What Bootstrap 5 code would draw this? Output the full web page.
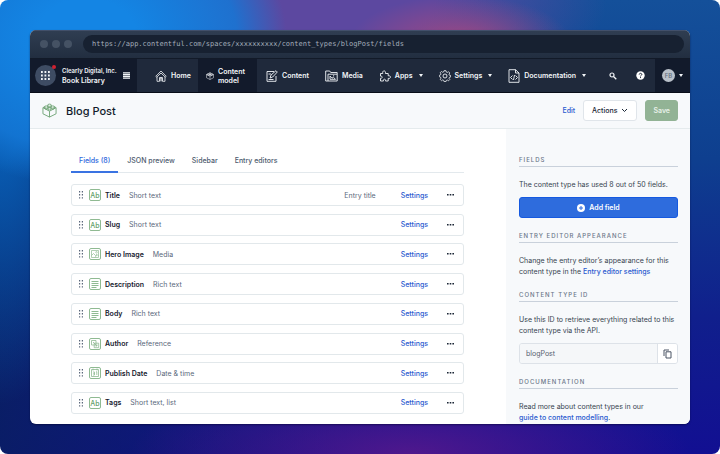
<!DOCTYPE html>
<html lang="en">
<head>
<meta charset="utf-8">
<meta name="viewport" content="width=device-width, initial-scale=1">
<title>Blog Post – Content model</title>
<link href="https://cdn.jsdelivr.net/npm/bootstrap@5.3.0/dist/css/bootstrap.min.css" rel="stylesheet">
<style>
html{background:#fff}
body{font-family:Inter,"Liberation Sans",sans-serif;font-size:7px;line-height:11px;color:#36434f;background:#fff}
.stage{min-height:100vh;padding:30px;border-radius:8px;
background:
radial-gradient(ellipse 200px 150px at 12% 8%,#1485e4 25%,rgba(20,120,215,.85) 75%,transparent),
radial-gradient(ellipse 110px 45px at 64% 9%,rgba(165,72,130,.95),transparent),
radial-gradient(ellipse 290px 120px at 44% 0,rgba(92,72,160,1) 40%,transparent),
radial-gradient(ellipse 280px 80px at 57% 100%,rgba(82,24,140,.95),transparent),
radial-gradient(ellipse 110px 350px at 0 12%,rgba(8,100,190,.85) 30%,transparent),
linear-gradient(90deg,rgba(8,32,92,.8) 0,rgba(12,28,100,.5) 25%,transparent 60%),
linear-gradient(180deg,#14509a 0,#0e3f8f 35%,#101f8c 70%,#120f92 100%)}
.app-window{border-radius:6px;overflow:hidden;background:#fff;box-shadow:0 1px 2px rgba(0,0,40,.5);height:0;min-height:calc(100vh - 60px)}
.chrome{height:28px;background:linear-gradient(#303e52,#222e40);padding:0 6px 0 10px;gap:4px;box-shadow:inset 0 1px 0 #42506a}
.chrome i{width:8px;height:8px;border-radius:50%;background:#455264}
.address{background:#172131;border:0;border-radius:9px;height:18px;padding:0 9px;margin-left:7px;color:#a3adba;font:7px "DejaVu Sans Mono","Liberation Mono",monospace;min-width:0}
.topnav{height:35px;background:#1f293b;border-top:1px solid #121a28;border-bottom:1px solid #080d18;color:#f2f5f8;font-weight:600}
.topnav a{color:inherit;text-decoration:none;line-height:9px;gap:4px}
.topnav button{color:inherit;background:none;border:0;padding:0;font-weight:600}
.topnav .dark{background:#121a2b}
.space{width:107px;padding-left:5px;gap:6px}
.space-name{line-height:10px;white-space:nowrap}
.org{font-size:6px}
.apps-btn{width:21px;height:21px;border-radius:50%;background:#3e4c63!important;position:relative}
.apps-btn b{position:absolute;right:0;top:0;width:4px;height:4px;border-radius:50%;background:#cf2130}
.caret{border:2px solid transparent;border-top:3px solid #f2f5f8;border-bottom:0;margin-left:2px}
.home-link{width:61px;padding-left:18px}
.model-link{width:59px;padding:0 8px}
.content-link{padding-left:9px}
.tools{gap:19px;margin-right:10px}
.user{width:35px}
.avatar{width:13px;height:13px;border-radius:50%;background:#b9c0c9;color:#626e7d;font-size:6px;font-weight:500}
.page-head{height:36px;background:#f7f9fb;border-bottom:1px solid #e5ebed;padding:0 12px;color:#111b2b}
.page-head h1{font-size:11px;line-height:14px;font-weight:500;margin:0 auto 0 9px}
a.act,.act{color:#2a59cf;text-decoration:none;font-weight:500}
.ctl{font-size:7px;line-height:11px;height:21px;padding:0 8px;border-radius:3px;font-weight:500}
.ctl-out{background:#fff;border:1px solid #e0e5ea;color:#1a2636}
.ctl-save,.ctl-save:disabled{background:#92b395;border-color:#92b395;color:#e7f0e8;opacity:1;font-weight:600;padding:0 7px}
.ctl-add{background:#2e6cdd;border:1px solid #1559e0;color:#fff;font-weight:600}
.content-area{padding:20px 42px 10px 41px;min-width:0}
.tabs{border-bottom:1px solid #e3e9ed;margin-bottom:11px;gap:1px}
.tabs button{border:0;background:none;height:24px;padding:0 8px;color:#4d5b6e;font-weight:500;margin-bottom:-1px;border-bottom:2px solid transparent}
.tabs .on{color:#2e68dc;border-color:#3a73e2}
.field-row{height:22px;border:1px solid #e2e8eb;border-radius:3px;padding:0 9px 0 7px}
.grip{margin-right:6px}
.field-row strong{font-weight:600;color:#16202e;margin:0 9px 0 4px}
.field-row .kind,.hint{color:#5a687b}
.hint{margin-right:25px}
.dots{border:0;background:none;padding:0;margin-left:19px}
.side{width:184px;background:#f7f9fb;padding:25px 12px 0 13px;overflow:hidden}
.side h2{font-size:6px;line-height:12px;font-weight:500;letter-spacing:1px;color:#6b7789;border-bottom:1px solid #c9d1db;margin:0 0 12px;text-transform:uppercase}
.side p{margin:0 0 7px}
.side section{margin-bottom:12px}
.side section p:last-child{margin:0}
.id-box{height:21px;border:1px solid #dde2e8;border-radius:3px;overflow:hidden}
.id-box input{border:0;background:#f5f7f9;color:#56616f;padding:0 6px;min-width:0;font-size:7px}
.id-box button{width:20px;background:#fff;border:0;border-left:1px solid #dde2e8;padding:0;color:#4a5564}
svg{display:block;flex:none;fill:none;stroke:currentColor}
</style>
<script src="https://cdn.jsdelivr.net/npm/bootstrap@5.3.0/dist/js/bootstrap.bundle.min.js"></script>
</head>
<body>
<svg width="0" height="0" class="position-absolute" aria-hidden="true">
<symbol id="brick" viewBox="0 0 16 16"><path d="M3 3.800 1 5v6.500L8 15l7-3.500V5l-2-1.200M1 5l7 3.700L15 5M8 8.700V15"/><path d="M6 2.600v1.200c0 1.400 4 1.400 4 0V2.600M2.600 4.500v1c0 1.400 4 1.400 4 0v-1M9.400 4.500v1c0 1.400 4 1.400 4 0v-1"/><ellipse cx="8" cy="2.400" rx="2" ry="1.200"/><ellipse cx="4.600" cy="4.300" rx="2" ry="1.200"/><ellipse cx="11.400" cy="4.300" rx="2" ry="1.200"/><ellipse cx="8" cy="6.200" rx="2" ry="1.200"/></symbol>
<symbol id="grip" viewBox="0 0 4 8"><path fill="#59667a" stroke="none" d="M0 0h1.200v1.400H0zM2.800 0H4v1.400H2.800zM0 3.100h1.200v1.400H0zM2.800 3.100H4v1.400H2.800zM0 6.200h1.200v1.400H0zM2.800 6.200H4v1.400H2.800z"/></symbol>
<symbol id="t-ab" viewBox="0 0 12 12"><rect x=".5" y=".5" width="11" height="11" rx="1.500"/></symbol>
<symbol id="t-media" viewBox="0 0 12 12"><rect x=".5" y=".5" width="11" height="11" rx="1.500"/><path stroke-width=".7" d="M2.500 2.500h7v7h-7z M2.500 7.500 4.500 5.500l2 2L8 6.500l1.500 1.500 M6 9.500l2-3"/><circle cx="7.500" cy="4.300" r=".8" stroke-width=".6"/></symbol>
<symbol id="t-rich" viewBox="0 0 12 12"><rect x=".5" y=".5" width="11" height="11" rx="1.500"/><path d="M2.500 3.500h7M2.500 5.500h7M2.500 7.500h7M2.500 9.500h5"/></symbol>
<symbol id="t-ref" viewBox="0 0 12 12"><rect x=".5" y=".5" width="11" height="11" rx="1.500"/><path stroke-width=".8" d="M2.500 2.500h4.500v4.500H2.500zM5.200 5.200h4.500v4.500H5.200zM4 4l4 4M6.500 8H8V6.500"/></symbol>
<symbol id="t-date" viewBox="0 0 12 12"><rect x=".5" y=".5" width="11" height="11" rx="1.500"/><path stroke-width=".8" d="M2.500 2.500h7v7h-7z M4 1.500v2M8 1.500v2 M4 5h1.500v3H4M4.300 6.500h1.200M7 5l.8-.3V8"/></symbol>
</svg>

<div class="stage">
<main class="app-window d-flex flex-column">
  <div class="chrome d-flex align-items-center flex-shrink-0"><i></i><i></i><i></i>
    <input class="address flex-grow-1" aria-label="Address" value="https://app.contentful.com/spaces/xxxxxxxxxx/content_types/blogPost/fields">
  </div>

  <nav class="topnav d-flex flex-shrink-0">
    <div class="space dark d-flex align-items-center">
      <button class="apps-btn d-flex align-items-center justify-content-center" aria-label="Apps menu"><svg width="9" height="9" viewBox="0 0 9 9"><path stroke-width="1.800" stroke-dasharray="1.800 1.700" d="M0 1h9M0 4.500h9M0 8h9"/></svg><b></b></button>
      <div class="space-name"><span class="org">Clearly Digital, Inc.</span><br>Book Library</div>
      <button aria-label="Menu"><svg width="7" height="7" viewBox="0 0 7 7"><path stroke-width="1.200" d="M0 .8h7M0 2.600h7M0 4.400h7M0 6.200h7"/></svg></button>
    </div>
    <div class="d-flex align-items-stretch flex-grow-1">
      <a href="#" class="home-link d-flex align-items-center"><svg width="12" height="12" viewBox="0 0 12 12"><path stroke-width=".8" d="M.8 6.300 6 1l5.200 5.300-1 .8L6 3 1.800 7.100zM2 7v4.300h2.500V7.500h3v3.800H10V7M5.200 11.300V8.200h1.600v3.100"/></svg>Home</a>
      <a href="#" class="model-link dark d-flex align-items-center"><svg width="8" height="8"><use href="#brick"/></svg><span>Content<br>model</span></a>
      <a href="#" class="content-link d-flex align-items-center"><svg width="12" height="12" viewBox="0 0 12 12"><path stroke-width=".9" d="M8 1.500H1v9.800h9V6M4 8l1-3 5-4.300L11.300 2 6.700 7zM2.500 4h2.500M2.500 9.500h5"/></svg>Content</a>
      <a href="#" class="d-flex align-items-center ms-3"><svg width="13" height="12" viewBox="0 0 13 12"><path stroke-width=".9" d="M3 11H.7V1h4l1 1.500h6.500V11H3V4.200h9M5 9.200V6l2 2.200 1.300-1L10.500 9.300H5M8 5.800h1.200"/></svg>Media</a>
      <a href="#" class="d-flex align-items-center ms-3"><svg width="12" height="12" viewBox="0 0 12 12"><path stroke-width=".9" d="M1.500 3.500h2.300c-1-3.500 3.500-3.500 2.600 0h2.800v2.300c3-.8 3 3.400 0 2.600V11H6.500c.7-2.400-2.700-2.400-2 0h-3V8.300c2.200.5 2.200-2.700 0-2.200z"/></svg>Apps<span class="caret"></span></a>
      <a href="#" class="d-flex align-items-center ms-3"><svg width="12" height="12" viewBox="0 0 12 12"><circle cx="6" cy="6" r="2" stroke-width=".9"/><path stroke-width=".8" d="M5 .7h2l.3 1.400 1 .4 1.200-.8 1.300 1.300-.8 1.200.4 1 1.300.3v1.500l-1.300.3-.4 1 .8 1.200-1.300 1.300-1.200-.8-1 .4-.3 1.200H5l-.3-1.300-1-.4-1.200.8-1.300-1.300.8-1.200-.4-1L.4 6.700V5.300l1.200-.4.4-1-.8-1.200 1.300-1.200 1.200.8 1-.4z"/></svg>Settings<span class="caret"></span></a>
      <a href="#" class="d-flex align-items-center ms-3"><svg width="12" height="14" viewBox="0 0 12 14"><path d="M1 .7h6.500L11 4v9.300H1zM7.500.7V4H11M4.500 6.500l-2 2 2 2M7.500 6.500l2 2-2 2M6.500 6l-1 5" stroke-width=".9"/></svg>Documentation<span class="caret"></span></a>
      <div class="tools d-flex align-items-center ms-auto">
      <button aria-label="Search"><svg width="8" height="8" viewBox="0 0 8 8"><circle cx="3" cy="3" r="2" stroke-width="1.200"/><path stroke-width="1.300" d="m4.500 4.500 2.800 2.800"/></svg></button>
      <button aria-label="Help"><svg width="9" height="9" viewBox="0 0 9 9"><circle cx="4.500" cy="4.500" r="4.200" fill="#fff" stroke="none"/><path stroke="#1f293b" d="M3.200 3.600c0-1.800 2.800-1.600 2.600 0C5.700 4.400 4.500 4.300 4.500 5.400M4.500 6.100v1"/></svg></button>
      </div>
    </div>
    <button class="dark user d-flex align-items-center justify-content-center" aria-label="Account"><span class="avatar d-flex align-items-center justify-content-center">FB</span><span class="caret ms-1"></span></button>
  </nav>

  <header class="page-head d-flex align-items-center flex-shrink-0">
    <svg width="15" height="15" color="#72a577"><use href="#brick"/></svg>
    <h1>Blog Post</h1>
    <a href="#" class="act me-2">Edit</a>
    <button class="btn ctl ctl-out d-flex align-items-center gap-1 me-2">Actions <svg width="7" height="5" viewBox="0 0 7 5"><path d="m1 1 2.500 2.500L6 1"/></svg></button>
    <button class="btn ctl ctl-save" disabled>Save</button>
  </header>

  <div class="d-flex flex-grow-1 overflow-hidden">
    <div class="content-area flex-grow-1 d-flex flex-column">
      <div class="tabs d-flex" role="tablist"><button role="tab" class="on" aria-selected="true">Fields (8)</button><button role="tab">JSON preview</button><button role="tab">Sidebar</button><button role="tab">Entry editors</button></div>
      <div id="fields" class="d-flex flex-column justify-content-between flex-grow-1"></div>
    </div>
    <aside class="side flex-shrink-0">
      <section><h2>Fields</h2><p>The content type has used 8 out of 50 fields.</p>
        <button class="btn ctl ctl-add w-100 d-flex align-items-center justify-content-center gap-1"><svg width="8" height="8" viewBox="0 0 8 8"><circle cx="4" cy="4" r="4" fill="#fff" stroke="none"/><path stroke="#2e6cdd" d="M4 2v4M2 4h4"/></svg>Add field</button></section>
      <section><h2>Entry editor appearance</h2><p>Change the entry editor’s appearance for this<br>content type in the <a class="act" href="#">Entry editor settings</a></p></section>
      <section><h2>Content type ID</h2><p>Use this ID to retrieve everything related to this content type via the API.</p>
        <div class="id-box d-flex"><input class="flex-grow-1" aria-label="Content type ID" value="blogPost" readonly><button aria-label="Copy" class="d-flex align-items-center justify-content-center"><svg width="9" height="10" viewBox="0 0 9 10"><path d="M1 7V1h5M3 2.800h5v6.200H3z"/></svg></button></div></section>
      <section><h2>Documentation</h2><p>Read more about content types in our<br><a class="act" href="#">guide to content modelling</a>.</p></section>
    </aside>
  </div>
</main>
</div>
<script>
const fields=[["Title","Short text","ab","Entry title"],["Slug","Short text","ab"],["Hero Image","Media","media"],["Description","Rich text","rich"],["Body","Rich text","rich"],["Author","Reference","ref"],["Publish Date","Date & time","date"],["Tags","Short text, list","ab"]];
document.getElementById("fields").innerHTML=fields.map(([n,k,t,h])=>`<div class="field-row d-flex align-items-center"><svg width="4" height="8" class="grip"><use href="#grip"/></svg><svg width="12" height="12" viewBox="0 0 12 12" color="#8fba92"><use href="#t-${t}"/>${t==="ab"?'<text x="6" y="8.500" text-anchor="middle" font-size="7" font-weight="500" fill="#66a16b" stroke="none">Ab</text>':""}</svg><strong>${n}</strong><span class="kind me-auto">${k.replace("&","&amp;")}</span>${h?`<span class="hint">${h}</span>`:""}<a class="act" href="#">Settings</a><button class="dots" aria-label="More"><svg width="7" height="2" viewBox="0 0 7 2"><path fill="#1c2736" stroke="none" d="M0 0h1.600v1.500H0zM2.700 0h1.600v1.500H2.700zM5.400 0H7v1.500H5.400z"/></svg></button></div>`).join("");
</script>
</body>
</html>
